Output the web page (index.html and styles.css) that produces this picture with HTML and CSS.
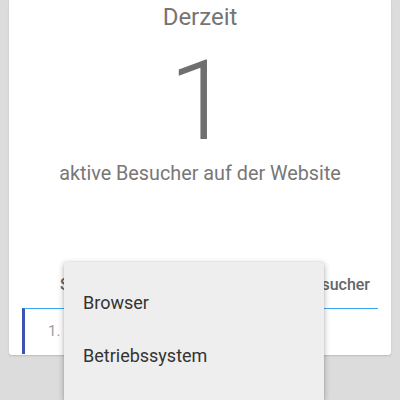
FILE: index.html
```html
<!DOCTYPE html>
<html lang="de">
<head>
<meta charset="utf-8">
<link rel="stylesheet" href="styles.css">
</head>
<body>
<div class="card">
  <div class="title">Derzeit</div>
  <div class="count">1</div>
  <div class="subtitle">aktive Besucher auf der Website</div>
  <div class="table">
    <div class="thead">
      <span>Seite</span>
      <span>Besucher</span>
    </div>
    <div class="row">
      <span class="idx">1.</span>
    </div>
  </div>
</div>
<div class="menu">
  <div class="item">Browser</div>
  <div class="item">Betriebssystem</div>
</div>
</body>
</html>
```
FILE: styles.css
```css
html, body {
  margin: 0;
  padding: 0;
  width: 400px;
  height: 400px;
  overflow: hidden;
  background: #dcdcdc;
  font-family: Roboto, "Noto Sans", sans-serif;
}
.card {
  margin: 0 9px;
  height: 355px;
  background: #ffffff;
  border-radius: 0 0 3px 3px;
  box-shadow: 0 1px 2px rgba(0,0,0,0.15);
  display: flex;
  flex-direction: column;
  overflow: hidden;
}
.title {
  padding-top: 3px;
  font-size: 24px;
  line-height: 28px;
  color: #757575;
  text-align: center;
}
.count {
  margin-top: 14px;
  font-size: 112px;
  line-height: 112px;
  font-weight: 300;
  color: #6f6f6f;
  text-align: center;
}
.subtitle {
  margin-top: 5px;
  font-size: 19.8px;
  line-height: 24px;
  color: #777777;
  text-align: center;
}
.table {
  margin: 89px 13px 0;
  display: flex;
  flex-direction: column;
}
.thead {
  display: flex;
  justify-content: space-between;
  padding: 0 8px 13px 38px;
  font-size: 16px;
  line-height: 20px;
  font-weight: 500;
  color: #666666;
}
.row {
  border-top: 1px solid #3aa8f0;
  border-left: 3px solid #3f51b5;
  height: 45px;
  padding-left: 23px;
  font-size: 15px;
  line-height: 45px;
  color: #9e9e9e;
}
.menu {
  position: absolute;
  left: 64px;
  top: 262px;
  width: 260px;
  height: 138px;
  padding-top: 14px;
  background: #eeeeee;
  box-shadow: 0 2px 6px rgba(0,0,0,0.3), 0 0 2px rgba(0,0,0,0.12);
  border-radius: 2px 2px 0 0;
  box-sizing: border-box;
}
.item {
  height: 53px;
  line-height: 53px;
  padding-left: 19px;
  font-size: 18px;
  color: #333333;
}
```
